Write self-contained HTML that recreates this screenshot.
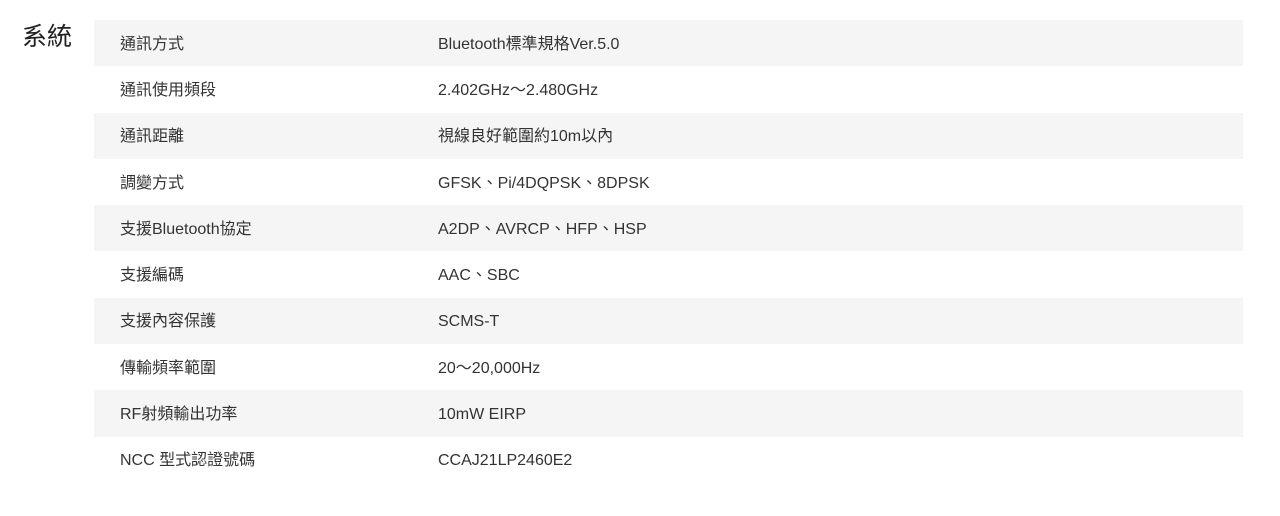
<!DOCTYPE html>
<html><head><meta charset="utf-8"><style>
body{margin:0;background:#fff;width:1280px;height:516px;overflow:hidden;font-family:"Liberation Sans","Noto Sans CJK TC",sans-serif;color:#333}
h2{position:absolute;left:22px;top:20px;margin:0;font-size:25px;font-weight:normal;color:#222;line-height:34px}
table{position:absolute;left:94px;top:20px;width:1149px;border-collapse:collapse}
td{height:46.3px;padding:3px 0 0 0;box-sizing:border-box;font-size:16px;line-height:20px}
tr:nth-child(odd){background:#f5f5f5}
td:first-child{padding-left:26px;width:344px}
</style></head><body>
<h2>系統</h2>
<table>
<tr><td>通訊方式</td><td>Bluetooth標準規格Ver.5.0</td></tr>
<tr><td>通訊使用頻段</td><td>2.402GHz～2.480GHz</td></tr>
<tr><td>通訊距離</td><td>視線良好範圍約10m以內</td></tr>
<tr><td>調變方式</td><td>GFSK、Pi/4DQPSK、8DPSK</td></tr>
<tr><td>支援Bluetooth協定</td><td>A2DP、AVRCP、HFP、HSP</td></tr>
<tr><td>支援編碼</td><td>AAC、SBC</td></tr>
<tr><td>支援內容保護</td><td>SCMS-T</td></tr>
<tr><td>傳輸頻率範圍</td><td>20～20,000Hz</td></tr>
<tr><td>RF射頻輸出功率</td><td>10mW EIRP</td></tr>
<tr><td>NCC 型式認證號碼</td><td>CCAJ21LP2460E2</td></tr>
</table>
</body></html>
